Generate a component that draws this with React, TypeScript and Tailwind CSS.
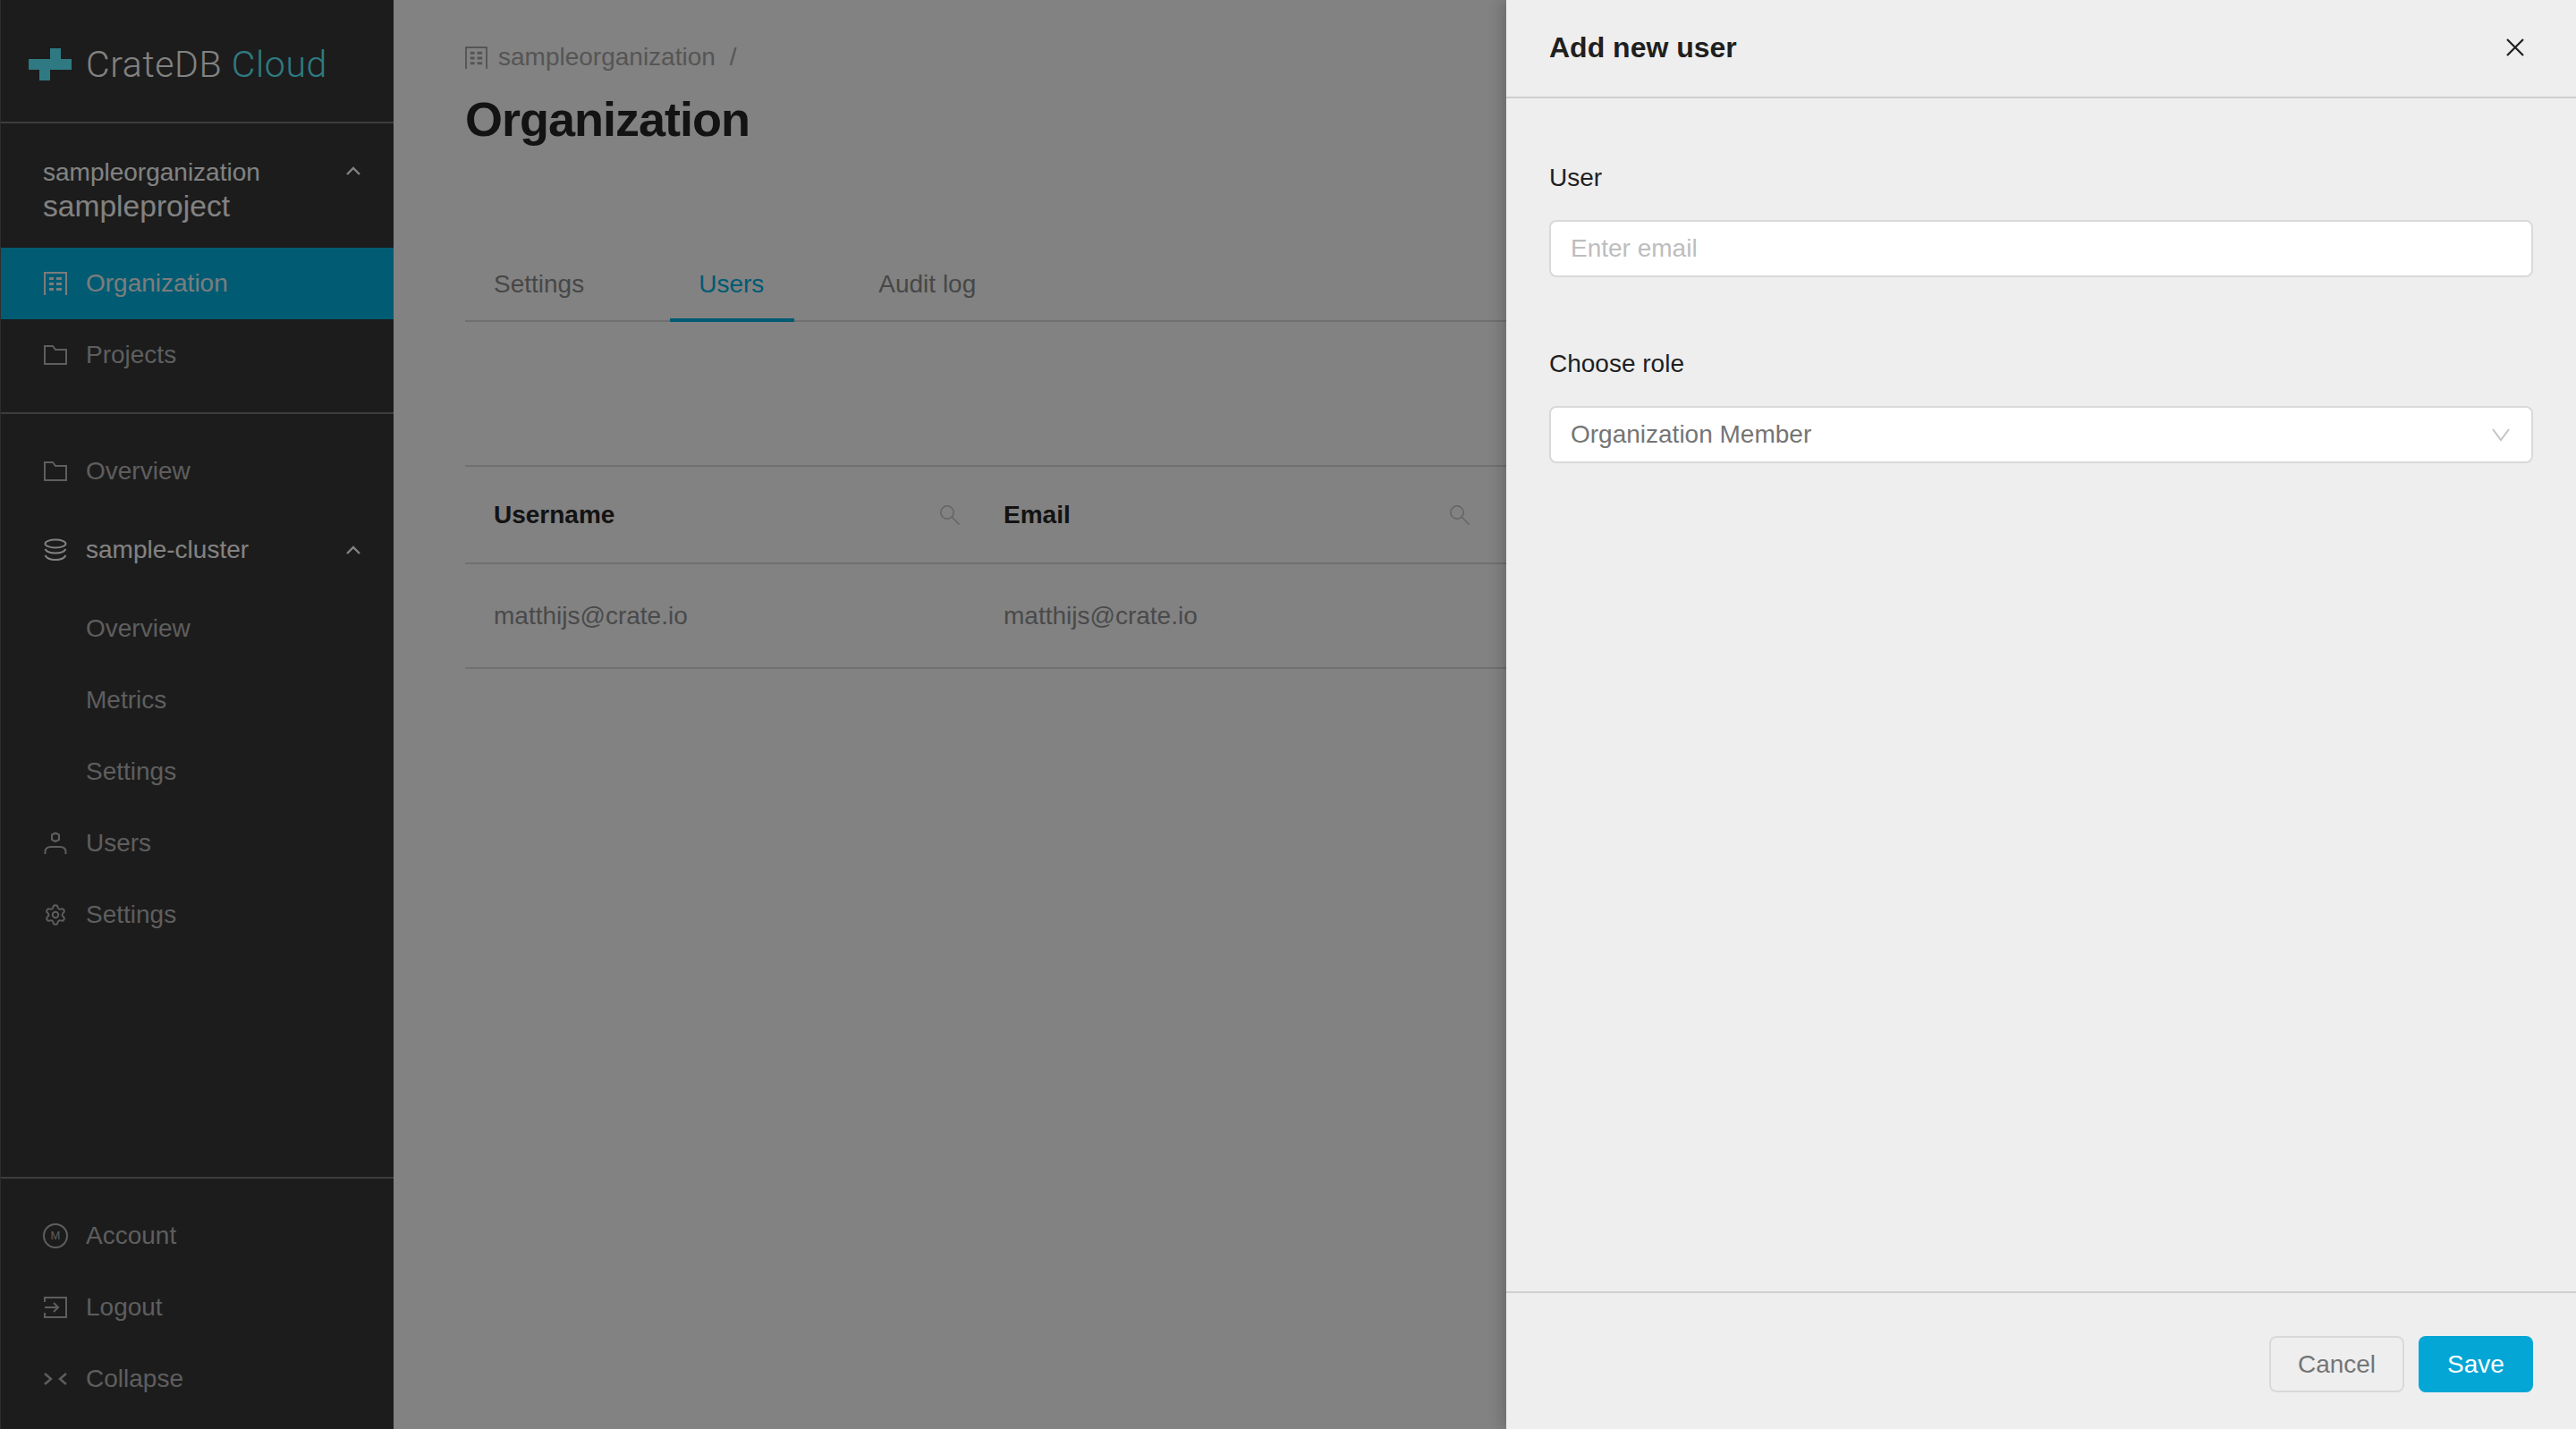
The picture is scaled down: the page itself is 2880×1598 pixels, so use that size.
import { Settings } from "lucide-react";
import type { ReactNode } from "react";

function BuildingIcon({ className }: { className?: string }) {
  return (
    <svg viewBox="0 0 26 26" fill="none" className={className}>
      <path d="M1 26V1h24v25" stroke="currentColor" strokeWidth="2" />
      <path
        d="M6 6h5v3H6zM14 6h6v3h-6zM6 12h5v3H6zM14 12h6v3h-6zM6 18h5v3H6zM14 18h6v3h-6z"
        fill="currentColor"
      />
    </svg>
  );
}

function FolderIcon() {
  return (
    <svg viewBox="0 0 26 22" fill="none" className="h-[22px] w-[26px]">
      <path d="M1 21V1h9l3 4h12v16z" stroke="currentColor" strokeWidth="2" />
    </svg>
  );
}

function DatabaseIcon() {
  return (
    <svg viewBox="0 0 26 26" fill="none" className="h-[26px] w-[26px]">
      <ellipse cx="13" cy="6" rx="11.5" ry="4.5" stroke="currentColor" strokeWidth="2" />
      <path
        d="M1.500 12c1.500 3 5.500 4.500 11.500 4.500S23 15 24.500 12M1.500 19c1.500 3 5.500 5 11.500 5s10-2 11.500-5"
        stroke="currentColor"
        strokeWidth="2"
      />
    </svg>
  );
}

function UserIcon() {
  return (
    <svg viewBox="0 0 26 26" fill="none" className="h-[26px] w-[26px]">
      <path d="M9 3.500 13 1.500l4 2V9l-4 2-4-2z" stroke="currentColor" strokeWidth="2" strokeLinejoin="round" />
      <path d="M1.500 25v-3c0-3 3-5 6-5h11c3 0 6 2 6 5v3" stroke="currentColor" strokeWidth="2" />
    </svg>
  );
}

function LogoutIcon() {
  return (
    <svg viewBox="0 0 26 26" fill="none" className="h-[26px] w-[26px]">
      <path d="M1 7V2h24v22H1v-5" stroke="currentColor" strokeWidth="2" />
      <path d="M1 13h15M11 8l5 5-5 5" stroke="currentColor" strokeWidth="2" />
    </svg>
  );
}

function CollapseIcon() {
  return (
    <svg viewBox="0 0 26 16" fill="none" className="h-4 w-[26px]">
      <path d="M1 2l7 6-7 6M25 2l-7 6 7 6" stroke="currentColor" strokeWidth="2.400" />
    </svg>
  );
}

function ChevronUp() {
  return (
    <svg viewBox="0 0 16 10" fill="none" className="h-[10px] w-4">
      <path d="M1 9l7-7 7 7" stroke="currentColor" strokeWidth="2.400" />
    </svg>
  );
}

function SearchIcon() {
  return (
    <svg viewBox="0 0 22 22" fill="none" className="h-[22px] w-[22px] text-[#c2c2c2]">
      <circle cx="8" cy="8" r="7.200" stroke="currentColor" strokeWidth="1.500" />
      <path d="M13.300 13.300l8.200 8.200" stroke="currentColor" strokeWidth="1.500" />
    </svg>
  );
}

function NavRow({
  icon,
  label,
  active,
}: {
  icon?: ReactNode;
  label: string;
  active?: boolean;
}) {
  return (
    <div
      className={`flex h-20 items-center gap-[21px] pl-12 text-[28px] ${
        active ? "bg-[#00b2e1] text-[#f4f4f4]" : "text-[#b8b8b8]"
      }`}
    >
      <span className="flex w-[26px] justify-center">{icon}</span>
      <span>{label}</span>
    </div>
  );
}

function Sidebar() {
  return (
    <aside className="flex h-full w-[440px] shrink-0 flex-col border-l border-[#5a5a5a] bg-[#373737]">
      <div className="flex h-[138px] items-center gap-[16px] border-b-2 border-[#787878] pt-[8px] pl-[31px]">
        <svg viewBox="0 0 48 36" className="h-9 w-12 fill-[#5cefff]">
          <path d="M24 0h12v12h12v12H24v12H12V24H0V12h24z" />
        </svg>
        <span className="font-['Roboto',sans-serif] text-[41px] leading-none font-light tracking-[0.600px] text-white">
          CrateDB <span className="text-[#5cefff]">Cloud</span>
        </span>
      </div>

      <div className="flex h-[139px] justify-between pt-[34px] pr-[37px] pl-[47px] text-white">
        <div>
          <div className="text-[28px] leading-[42px]">sampleorganization</div>
          <div className="text-[33.600px] leading-[34px]">sampleproject</div>
        </div>
        <div className="pt-[14px]">
          <ChevronUp />
        </div>
      </div>

      <NavRow active icon={<BuildingIcon className="h-[26px] w-[26px]" />} label="Organization" />
      <NavRow icon={<FolderIcon />} label="Projects" />

      <div className="mt-6 border-t-2 border-[#787878] pt-6">
        <NavRow icon={<FolderIcon />} label="Overview" />
        <div className="flex h-24 items-center justify-between pr-[37px] pl-12 text-[28px] text-white">
          <div className="flex items-center gap-[21px]">
            <DatabaseIcon />
            <span>sample-cluster</span>
          </div>
          <ChevronUp />
        </div>
        <NavRow label="Overview" />
        <NavRow label="Metrics" />
        <NavRow label="Settings" />
        <NavRow icon={<UserIcon />} label="Users" />
        <NavRow icon={<Settings size={28} strokeWidth={1.8} />} label="Settings" />
      </div>

      <div className="mt-auto border-t-2 border-[#787878] pt-6 pb-4">
        <NavRow
          icon={
            <span className="flex h-7 w-7 shrink-0 items-center justify-center rounded-full border-2 border-current text-[13px]">
              M
            </span>
          }
          label="Account"
        />
        <NavRow icon={<LogoutIcon />} label="Logout" />
        <NavRow icon={<CollapseIcon />} label="Collapse" />
      </div>
    </aside>
  );
}

function HeaderCell({ label }: { label: string }) {
  return (
    <div className="flex items-center justify-between pr-[17px] pl-8">
      <span className="font-bold text-[#272727]">{label}</span>
      <SearchIcon />
    </div>
  );
}

function OrganizationPage() {
  return (
    <main className="min-w-0 flex-1 bg-white pt-[48px] pr-20 pl-20">
      <div className="flex h-8 items-center gap-3 text-[28px] text-[#a8a8a8]">
        <BuildingIcon className="h-[25px] w-[25px]" />
        <span>sampleorganization</span>
        <span className="ml-1">/</span>
      </div>
      <h1 className="mt-[21px] h-16 text-[54px] leading-[64px] font-bold tracking-[-1px] text-[#272727]">
        Organization
      </h1>

      <div className="mt-[115px] flex h-20 border-b-2 border-[#dcdcdc] text-[28px] text-[#8c8c8c]">
        <div className="-mb-[2px] flex items-center border-b-4 border-transparent px-8">Settings</div>
        <div className="-mb-[2px] ml-16 flex items-center border-b-4 border-[#00b2e1] pr-[34px] pl-8 text-[#00b2e1]">
          Users
        </div>
        <div className="-mb-[2px] ml-[62px] flex items-center border-b-4 border-transparent px-8">Audit log</div>
      </div>

      <div className="mt-40 border-t-2 border-[#dcdcdc] text-[28px]">
        <div className="grid h-[109px] grid-cols-[570px_570px_1fr] border-b-2 border-[#dcdcdc]">
          <HeaderCell label="Username" />
          <HeaderCell label="Email" />
        </div>
        <div className="grid h-[117px] grid-cols-[570px_570px_1fr] items-center border-b-2 border-[#dcdcdc] text-[#919191]">
          <div className="pl-8">matthijs@crate.io</div>
          <div className="pl-8">matthijs@crate.io</div>
        </div>
      </div>
    </main>
  );
}

function AddUserDrawer() {
  return (
    <div className="absolute top-0 right-0 flex h-full w-[1196px] flex-col bg-[#eeeeee] text-[#1f1f1f] shadow-[-6px_0_14px_rgba(0,0,0,0.16)]">
      <div className="flex h-[110px] items-center justify-between border-b-2 border-[#cfcfcf] pr-[58px] pb-[3px] pl-12">
        <h2 className="text-[32px] font-bold">Add new user</h2>
        <svg viewBox="0 0 20 20" fill="none" className="h-5 w-5">
          <path d="M1 1l18 18M19 1L1 19" stroke="#1f1f1f" strokeWidth="2.200" />
        </svg>
      </div>

      <div className="flex-1 px-12 pt-[69px] text-[28px]">
        <label className="block leading-10">User</label>
        <input
          placeholder="Enter email"
          className="mt-[27px] block h-16 w-full rounded-lg border-2 border-[#d9d9d9] bg-white px-[22px] placeholder:text-[#bdbdbd]"
        />
        <label className="mt-[77px] block leading-10">Choose role</label>
        <div className="mt-[27px] flex h-16 items-center justify-between rounded-lg border-2 border-[#d9d9d9] bg-white pr-6 pl-[22px] text-[#757575]">
          <span>Organization Member</span>
          <svg viewBox="0 0 20 15" fill="none" className="h-[15px] w-5">
            <path d="M1 1l9 12 9-12" stroke="#c4c4c4" strokeWidth="2" />
          </svg>
        </div>
      </div>

      <div className="flex h-[154px] justify-end gap-4 border-t-2 border-[#cfcfcf] px-12 pt-[48px] text-[28px]">
        <button className="h-[63px] w-[151px] rounded-lg border-2 border-[#d9d9d9] text-[#757575]">Cancel</button>
        <button className="h-[63px] w-32 rounded-lg bg-[#03a6d5] text-white">Save</button>
      </div>
    </div>
  );
}

export default function App() {
  return (
    <div className="relative flex h-[1598px] w-[2880px] overflow-hidden font-['Liberation_Sans',Arial,sans-serif]">
      <Sidebar />
      <OrganizationPage />
      {/* Modal backdrop dims everything behind the drawer */}
      <div className="absolute inset-0 bg-[rgba(0,0,0,0.49)]" />
      <AddUserDrawer />
    </div>
  );
}
